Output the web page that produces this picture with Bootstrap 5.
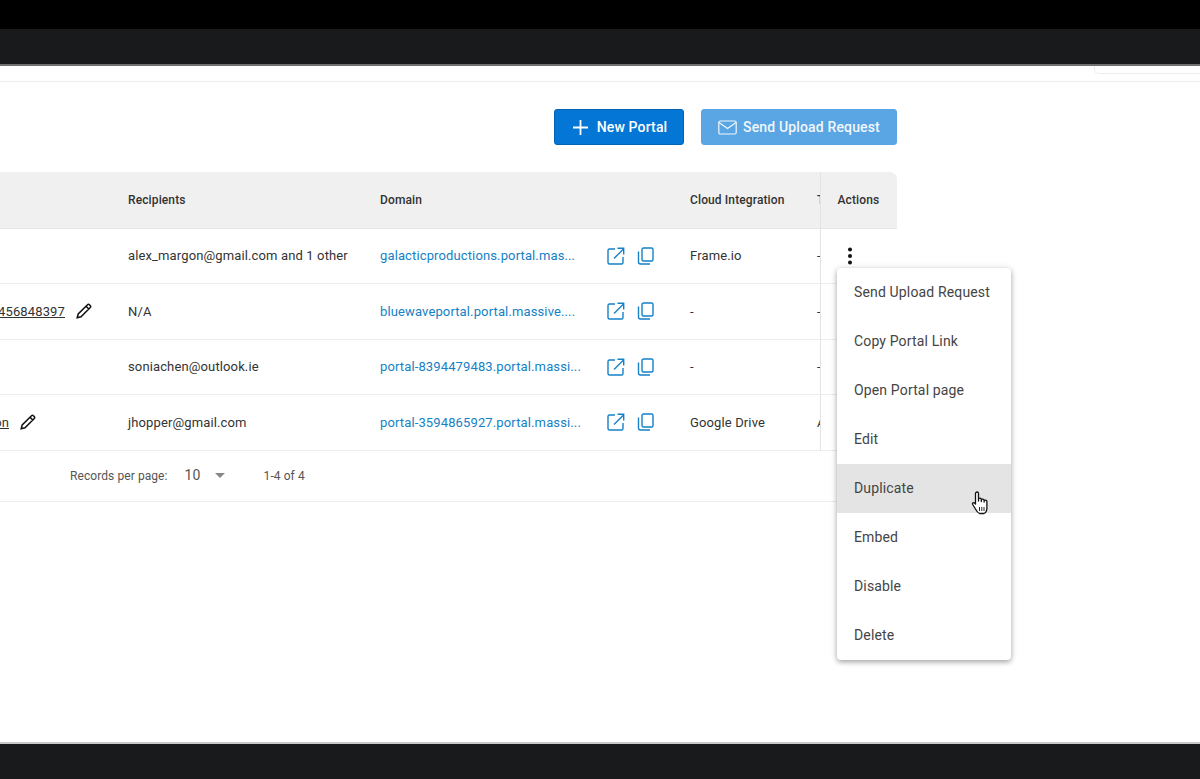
<!DOCTYPE html>
<html lang="en">
<head>
<meta charset="utf-8">
<title>Portals</title>
<link href="https://cdn.jsdelivr.net/npm/bootstrap@5.3.0/dist/css/bootstrap.min.css" rel="stylesheet">
<style>
html,body{height:100%;overflow:hidden}
body{font-family:Roboto,"Liberation Sans",sans-serif;background:#fff;color:#333}
.bar-black{height:29px;background:#000;flex:none}
.bar-dark{height:37px;background:#191a1c;border-bottom:2px solid #6f7071;flex:none}
.bar-foot{height:37px;background:#191a1c;border-top:2px solid #c9c9c9;flex:none}
.page-main{flex:1 1 auto;min-height:0;position:relative;overflow:hidden}
.top-strip{height:16px;border-bottom:1px solid #ececec}
.top-box{width:106px;height:8px;border:1px solid #ececec;border-top:0;border-right:0;border-bottom-left-radius:5px}
.toolbar{width:897px;height:36px;margin-top:27px;gap:17px}
.act-btn{height:36px;border-radius:3px;font-size:14px;font-weight:500;color:#fff;letter-spacing:.15px;padding:0}
.act-btn:disabled{opacity:1;color:#f1f7fc;background:#5aa5e3;border:1px solid #5aa5e3}
.btn-new{width:130px;background:#0476d5;border:1px solid #0364b6;gap:9px;padding-left:2px}
.btn-send{width:196px;gap:6px}
.portal-wrap{width:897px;margin-top:27px;border-top-right-radius:7px;overflow:hidden}
.portal-table{table-layout:fixed;width:897px;margin:0;font-size:13px;letter-spacing:.13px;color:#333}
.col-w1{width:112px}.col-w2{width:252px}.col-w3{width:310px}.col-w4{width:127px}.col-w5{width:19px}.col-w6{width:77px}
.portal-table>:not(caption)>*>*{padding:0 16px;border-bottom:1px solid #ececec;box-shadow:none;overflow:hidden;white-space:nowrap;background:#fff;color:#333;vertical-align:middle}
.portal-table>thead>tr>th{height:56px;background:#f0f0f0;font-weight:500;font-size:12px;color:#333;letter-spacing:.12px;border-bottom:1px solid #e6e6e6}
.portal-table>tbody>tr>td{height:55.5px}
.portal-table>:not(caption)>*>.cell-name{padding:0}
.portal-table>:not(caption)>*>.cell-clip{padding:0 0 0 16px}
.portal-table>:not(caption)>*>.cell-act{border-left:1px solid #e3e3e3;padding:0 0 0 17px}
.portal-table>tbody>tr>.cell-act{padding:0}
.name-box{gap:11px}
.name-box svg{flex:none}
.pad-a{padding-right:20px}
.pad-b{padding-right:76px}
.name-link{color:#333;text-decoration:underline}
.portal-table .dom-link{color:#1581c6;text-decoration:none;display:block;width:202px;overflow:hidden;flex:none}
.dom-icons{gap:12px;margin-left:25px}
.pager{height:51px;width:897px;border-bottom:1px solid #ececec;font-size:12px;color:#555;letter-spacing:.08px;padding-left:70px}
.pager-num{font-size:14px;margin-left:17px;width:30px;color:#555}
.pager-caret{width:0;height:0;border-left:5.5px solid transparent;border-right:5.5px solid transparent;border-top:5.5px solid #888;margin-right:39px}
.row-menu{position:absolute;left:837px;top:202px;width:174px;padding:0;margin:0;border:0;border-radius:4px;background:#fff;box-shadow:0 2px 5px rgba(0,0,0,.3),0 1px 10px rgba(0,0,0,.1);z-index:5;display:block}
.row-menu .dropdown-item{height:49px;padding:0 17px;display:flex;align-items:center;font-size:14px;letter-spacing:.15px;color:#444}
.row-menu .item-hover{background:#e4e4e4}
.hand{position:absolute;left:971px;top:425px;z-index:6}
</style>
</head>
<body class="d-flex flex-column">
<div class="bar-black"></div>
<div class="bar-dark"></div>
<main class="page-main">
  <div class="top-strip d-flex justify-content-end"><div class="top-box"></div></div>
  <div class="toolbar d-flex justify-content-end">
    <button class="btn act-btn btn-new d-flex align-items-center justify-content-center" type="button">
      <svg width="15" height="15" viewBox="0 0 15 15" fill="none" stroke="#fff" stroke-width="1.8"><path d="M7.500 0v15M0 7.500h15"/></svg>New Portal
    </button>
    <button class="btn act-btn btn-send d-flex align-items-center justify-content-center" type="button" disabled>
      <svg width="19" height="15" viewBox="0 0 19 15" fill="none" stroke="#f1f7fc" stroke-width="1.2"><rect x=".8" y="1" width="17.4" height="13" rx="1.5"/><path d="M1 2.5l8.5 6 8.5-6"/></svg>Send Upload Request
    </button>
  </div>
  <div class="portal-wrap">
    <table class="table portal-table">
      <colgroup><col class="col-w1"><col class="col-w2"><col class="col-w3"><col class="col-w4"><col class="col-w5"><col class="col-w6"></colgroup>
      <thead>
        <tr><th></th><th>Recipients</th><th>Domain</th><th>Cloud Integration</th><th class="cell-clip">T</th><th class="cell-act">Actions</th></tr>
      </thead>
      <tbody>
        <tr>
          <td class="cell-name"></td>
          <td>alex_margon@gmail.com and 1 other</td>
          <td><div class="d-flex align-items-center"><a class="dom-link" href="#">galacticproductions.portal.mas...</a><span class="d-flex align-items-center dom-icons"><svg width="18" height="18" viewBox="0 0 18 18" fill="none" stroke="#1581c6" stroke-width="1.4"><path d="M8 2H2.500A1.500 1.500 0 0 0 1 3.500V15.500A1.500 1.500 0 0 0 2.500 17H14.500A1.500 1.500 0 0 0 16 15.500V10M7 11.500L16.500 2M10.500 1.300H16.700V7.500"/></svg><svg width="17" height="18" viewBox="0 0 17 18" fill="none" stroke="#1581c6" stroke-width="1.4"><rect x="5" y="1" width="11" height="13" rx="1.500"/><path d="M1.500 4.500V15A2 2 0 0 0 3.500 17H13"/></svg></span></div></td>
          <td>Frame.io</td>
          <td class="cell-clip">-</td>
          <td class="cell-act"><div class="d-flex justify-content-start"><svg class="ms-3" width="26" height="20" viewBox="0 0 26 20" fill="#111"><circle cx="13" cy="3.500" r="2"/><circle cx="13" cy="10" r="2"/><circle cx="13" cy="16.500" r="2"/></svg></div></td>
        </tr>
        <tr>
          <td class="cell-name"><div class="d-flex justify-content-end align-items-center name-box pad-a"><span class="name-link">456848397</span><svg width="16" height="16" viewBox="0 0 16 16" fill="none" stroke="#111" stroke-width="1.500"><path d="M1.200 14.800l1-3.800L11.500 1.700a1.300 1.300 0 0 1 1.900 0l.9.900a1.300 1.300 0 0 1 0 1.900L5 13.800zM10 3.200l2.800 2.800"/></svg></div></td>
          <td>N/A</td>
          <td><div class="d-flex align-items-center"><a class="dom-link" href="#">bluewaveportal.portal.massive....</a><span class="d-flex align-items-center dom-icons"><svg width="18" height="18" viewBox="0 0 18 18" fill="none" stroke="#1581c6" stroke-width="1.4"><path d="M8 2H2.500A1.500 1.500 0 0 0 1 3.500V15.500A1.500 1.500 0 0 0 2.500 17H14.500A1.500 1.500 0 0 0 16 15.500V10M7 11.500L16.500 2M10.500 1.300H16.700V7.500"/></svg><svg width="17" height="18" viewBox="0 0 17 18" fill="none" stroke="#1581c6" stroke-width="1.4"><rect x="5" y="1" width="11" height="13" rx="1.500"/><path d="M1.500 4.500V15A2 2 0 0 0 3.500 17H13"/></svg></span></div></td>
          <td>-</td>
          <td class="cell-clip">-</td>
          <td class="cell-act"></td>
        </tr>
        <tr>
          <td class="cell-name"></td>
          <td>soniachen@outlook.ie</td>
          <td><div class="d-flex align-items-center"><a class="dom-link" href="#">portal-8394479483.portal.massi...</a><span class="d-flex align-items-center dom-icons"><svg width="18" height="18" viewBox="0 0 18 18" fill="none" stroke="#1581c6" stroke-width="1.4"><path d="M8 2H2.500A1.500 1.500 0 0 0 1 3.500V15.500A1.500 1.500 0 0 0 2.500 17H14.500A1.500 1.500 0 0 0 16 15.500V10M7 11.500L16.500 2M10.500 1.300H16.700V7.500"/></svg><svg width="17" height="18" viewBox="0 0 17 18" fill="none" stroke="#1581c6" stroke-width="1.4"><rect x="5" y="1" width="11" height="13" rx="1.500"/><path d="M1.500 4.500V15A2 2 0 0 0 3.500 17H13"/></svg></span></div></td>
          <td>-</td>
          <td class="cell-clip">-</td>
          <td class="cell-act"></td>
        </tr>
        <tr>
          <td class="cell-name"><div class="d-flex justify-content-end align-items-center name-box pad-b"><span class="name-link">on</span><svg width="16" height="16" viewBox="0 0 16 16" fill="none" stroke="#111" stroke-width="1.500"><path d="M1.200 14.800l1-3.800L11.500 1.700a1.300 1.300 0 0 1 1.900 0l.9.900a1.300 1.300 0 0 1 0 1.900L5 13.800zM10 3.200l2.800 2.800"/></svg></div></td>
          <td>jhopper@gmail.com</td>
          <td><div class="d-flex align-items-center"><a class="dom-link" href="#">portal-3594865927.portal.massi...</a><span class="d-flex align-items-center dom-icons"><svg width="18" height="18" viewBox="0 0 18 18" fill="none" stroke="#1581c6" stroke-width="1.4"><path d="M8 2H2.500A1.500 1.500 0 0 0 1 3.500V15.500A1.500 1.500 0 0 0 2.500 17H14.500A1.500 1.500 0 0 0 16 15.500V10M7 11.500L16.500 2M10.500 1.300H16.700V7.500"/></svg><svg width="17" height="18" viewBox="0 0 17 18" fill="none" stroke="#1581c6" stroke-width="1.4"><rect x="5" y="1" width="11" height="13" rx="1.500"/><path d="M1.500 4.500V15A2 2 0 0 0 3.500 17H13"/></svg></span></div></td>
          <td>Google Drive</td>
          <td class="cell-clip">A</td>
          <td class="cell-act"></td>
        </tr>
      </tbody>
    </table>
  </div>
  <div class="pager d-flex align-items-center">
    <span>Records per page:</span>
    <span class="pager-num">10</span>
    <span class="pager-caret"></span>
    <span>1-4 of 4</span>
  </div>
  <ul class="dropdown-menu row-menu">
    <li><a class="dropdown-item" href="#">Send Upload Request</a></li>
    <li><a class="dropdown-item" href="#">Copy Portal Link</a></li>
    <li><a class="dropdown-item" href="#">Open Portal page</a></li>
    <li><a class="dropdown-item" href="#">Edit</a></li>
    <li><a class="dropdown-item item-hover" href="#">Duplicate</a></li>
    <li><a class="dropdown-item" href="#">Embed</a></li>
    <li><a class="dropdown-item" href="#">Disable</a></li>
    <li><a class="dropdown-item" href="#">Delete</a></li>
  </ul>
  <svg class="hand" width="20" height="24" viewBox="0 0 20 24" fill="#fff" stroke="#111" stroke-width="1.300" stroke-linejoin="round"><path d="M4.500 2.500a1.500 1.500 0 0 1 3 0V10V8.500a1.400 1.400 0 0 1 2.800 0V10.500V9.500a1.400 1.400 0 0 1 2.800 0V11V10.500a1.400 1.400 0 0 1 2.800 0V17c0 3-1.500 5-3 5.500H8.500c-1.500-.5-3-2.500-4-4.500L1.700 13.500c-.7-1.300.9-2.500 2-1.500l.8 1z"/><path d="M8.500 16v4M10.800 16v4M13 16v4" stroke-width=".9"/></svg>
</main>
<div class="bar-foot"></div>
<script src="https://cdn.jsdelivr.net/npm/bootstrap@5.3.0/dist/js/bootstrap.bundle.min.js"></script>
</body>
</html>
